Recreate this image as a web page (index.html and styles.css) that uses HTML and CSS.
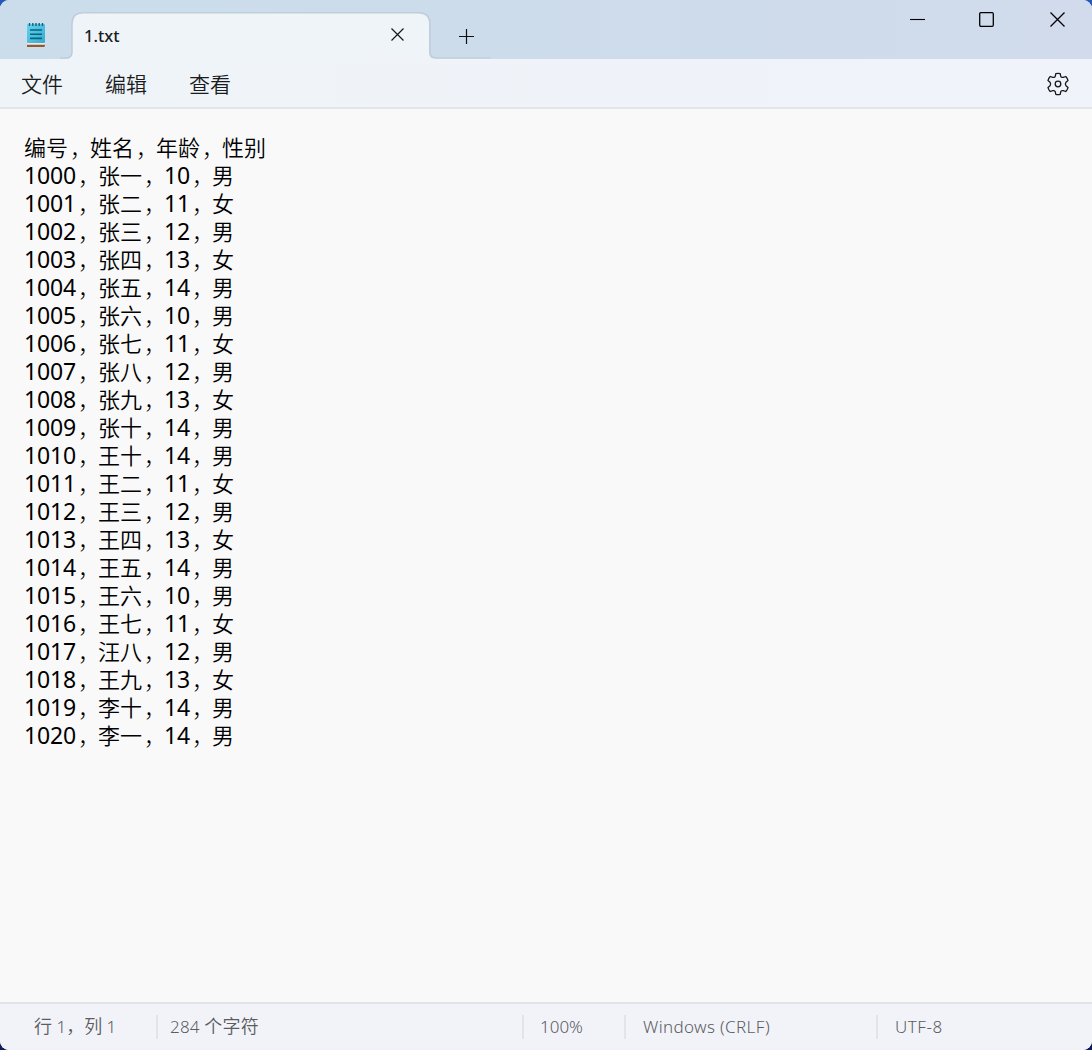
FILE: index.html
```html
<!DOCTYPE html>
<html lang="zh-CN">
<head>
<meta charset="utf-8">
<title>1.txt</title>
<link rel="stylesheet" href="styles.css">
</head>
<body>
<div class="window">
  <header class="titlebar">
    <div class="app-icon">
      <svg width="20" height="26" viewBox="0 0 20 26">
        <defs><linearGradient id="pad" x1="0" y1="0" x2="1" y2="1"><stop offset="0" stop-color="#66d3ee"/><stop offset="1" stop-color="#35abd0"/></linearGradient></defs>
        <rect x="1" y="20" width="18" height="3" fill="#f3e9e2"/>
        <path d="M1 22.7h18v.8a1.5 1.5 0 0 1-1.5 1.5H1z" fill="#935a31"/>
        <rect x="1" y="2" width="18" height="19" rx="1" fill="url(#pad)"/>
        <path d="M3.5 1v3M6.8 1v3M10 1v3M13.2 1v3M16.5 1v3" stroke="#14617e" stroke-width="1.4"/>
        <path d="M4 8h12M4 12.2h12M4 16.4h12" stroke="#08637f" stroke-width="1.6"/>
      </svg>
    </div>
    <div class="tab">
      <svg class="tab-shape" width="432" height="48" viewBox="0 0 432 48">
        <path d="M0 48V47.5H6Q12 46.500 12 41V12Q12 1 23 1H358Q369 1 369 12V41Q369 46.500 375 46.500H431V48Z" fill="#eff4f9"/>
        <path d="M0 46H6Q12 46 12 40V12Q12 .8 23 .8H358Q370 .8 370 12V40Q370 46 376 46H431" fill="none" stroke="#c0cedb" stroke-width="1.6"/>
      </svg>
      <span class="tab-title">1.txt</span>
      <svg class="tab-close" width="14" height="14" viewBox="0 0 14 14"><path d="M.5 .5l12 12M12.500 .5L.5 12.500" stroke="#161819" stroke-width="1.2"/></svg>
    </div>
    <div class="new-tab">
      <svg width="16" height="16" viewBox="0 0 16 16"><path d="M8.500 1v15M1 8.500h15" stroke="#111" stroke-width="1.2"/></svg>
    </div>
    <div class="controls">
      <svg width="16" height="16" viewBox="0 0 16 16"><path d="M1 8.500h15" stroke="#000" stroke-width="1.1"/></svg>
      <svg width="16" height="16" viewBox="0 0 16 16"><rect x=".7" y="1.700" width="13.600" height="13.600" rx="1.200" fill="none" stroke="#000" stroke-width="1.300"/></svg>
      <svg width="16" height="16" viewBox="0 0 16 16"><path d="M1.500 1.500l14 14M15.500 1.500L1.500 15.500" stroke="#000" stroke-width="1.300"/></svg>
    </div>
  </header>
  <nav class="menubar">
    <span>文件</span><span>编辑</span><span>查看</span>
    <svg class="gear" width="24" height="24" viewBox="0 0 24 24" fill="none" stroke="#17191b" stroke-width="1.300" stroke-linejoin="round">
      <circle cx="12" cy="12" r="2.800"/>
      <path d="M9.800 1.600Q12 1 14.200 1.600L14.700 4.200Q15.300 5.900 17.200 5.300L19.800 4.500Q21.400 6.200 22 8.400L20 10.200Q18.700 12 20 13.800L22 15.600Q21.400 17.800 19.800 19.500L17.200 18.700Q15.300 18.100 14.700 19.800L14.200 22.400Q12 23 9.800 22.400L9.300 19.800Q8.700 18.100 6.800 18.700L4.200 19.500Q2.600 17.800 2 15.600L4 13.800Q5.300 12 4 10.200L2 8.400Q2.600 6.200 4.200 4.500L6.800 5.300Q8.700 5.900 9.300 4.200Z"/>
    </svg>
  </nav>
  <main class="editor" id="editor"></main>
  <footer class="statusbar">
    <span class="position"><i>行</i> 1<i>，列</i> 1</span>
    <span class="count">284 <i>个字符</i></span>
    <span class="zoom">100%</span>
    <span class="newline">Windows (CRLF)</span>
    <span class="encoding">UTF-8</span>
  </footer>
</div>
<script src="editor.js"></script>
</body>
</html>
```
FILE: editor.js
```js
const text = `编号，姓名，年龄，性别
1000，张一，10，男
1001，张二，11，女
1002，张三，12，男
1003，张四，13，女
1004，张五，14，男
1005，张六，10，男
1006，张七，11，女
1007，张八，12，男
1008，张九，13，女
1009，张十，14，男
1010，王十，14，男
1011，王二，11，女
1012，王三，12，男
1013，王四，13，女
1014，王五，14，男
1015，王六，10，男
1016，王七，11，女
1017，汪八，12，男
1018，王九，13，女
1019，李十，14，男
1020，李一，14，男`;

// One block per line; digits and commas get their own metrics.
document.getElementById('editor').innerHTML = text.split('\n').map(line =>
  '<div>' + line
    .replace(/\d+/g, '<b>$&</b>')
    .replace(/，/g, '<span class="comma">，</span>') + '</div>'
).join('');
```
FILE: styles.css
```css
* { box-sizing: border-box; }
body {
  margin: 0;
  background: linear-gradient(#2459b8, #101c5c);
  font-family: "Noto Sans", "Noto Sans CJK SC", sans-serif;
}
svg { display: block; }
.window {
  display: flex;
  flex-direction: column;
  width: 1092px;
  height: 1050px;
  overflow: hidden;
  border-radius: 9px;
  background: #f9f9f9;
}
.titlebar {
  display: flex;
  height: 59px;
  background: linear-gradient(90deg, #cbddeb, #cddceb 45%, #d1dbeb);
}
.app-icon { width: 72px; padding: 22px 0 0 26px; }
.tab {
  position: relative;
  display: flex;
  justify-content: space-between;
  width: 358px;
  height: 47px;
  margin-top: 12px;
  padding: 0 25px 0 12px;
}
.tab-shape { position: absolute; left: -12px; top: 0; }
.tab-title {
  position: relative;
  font-size: 16.5px;
  font-weight: 500;
  line-height: 48px;
  color: #1a1c1d;
}
.tab-close { position: relative; margin-top: 16px; }
.new-tab { position: relative; padding: 28px 0 0 28px; }
.controls {
  display: flex;
  gap: 54px;
  margin-left: auto;
  padding: 11px 27px 0 0;
}
.menubar {
  display: flex;
  align-items: center;
  gap: 42px;
  height: 50px;
  padding: 0 22px 0 21px;
  border-bottom: 2px solid #e2e5e9;
  background: linear-gradient(90deg, #eff4f9, #f0f3f9);
  font-family: "Noto Sans CJK SC", sans-serif;
  font-size: 21px;
  font-weight: 350;
  color: #1a1c1d;
}
.menubar span { line-height: 48px; }
.gear { margin: 2px 0 0 auto; }
.editor {
  flex: 1;
  padding: 23px 24px;
  font-family: "Noto Sans CJK SC", sans-serif;
  font-size: 22px;
  font-weight: 350;
  line-height: 28px;
  color: #000;
}
.editor div { height: 28px; white-space: nowrap; }
.editor b {
  font-family: "Noto Sans", sans-serif;
  font-size: 23px;
  font-weight: 400;
  line-height: 20px;
  letter-spacing: -.15px;
}
.comma {
  position: relative;
  left: 2px;
  top: 1px;
  font-weight: 300;
}
.statusbar {
  display: flex;
  align-items: center;
  height: 48px;
  border-top: 2px solid #e2e4e9;
  background: #f2f3f9;
  font-size: 17px;
  font-weight: 350;
  color: #5a5c5f;
}
.statusbar span {
  height: 24px;
  padding-left: 17px;
  border-left: 2px solid #e2e4e8;
  line-height: 24px;
  white-space: nowrap;
}
.statusbar i {
  font-family: "Noto Sans CJK SC", sans-serif;
  font-size: 18px;
  font-style: normal;
  font-weight: 350;
  line-height: 20px;
}
.statusbar .position { width: 156px; padding-left: 34px; border: 0; }
.statusbar .count { width: 366px; padding-left: 12px; letter-spacing: .2px; }
.statusbar .zoom { width: 102px; padding-left: 16px; }
.statusbar .newline { width: 252px; letter-spacing: .35px; }
.statusbar .encoding { letter-spacing: .5px; }
```
